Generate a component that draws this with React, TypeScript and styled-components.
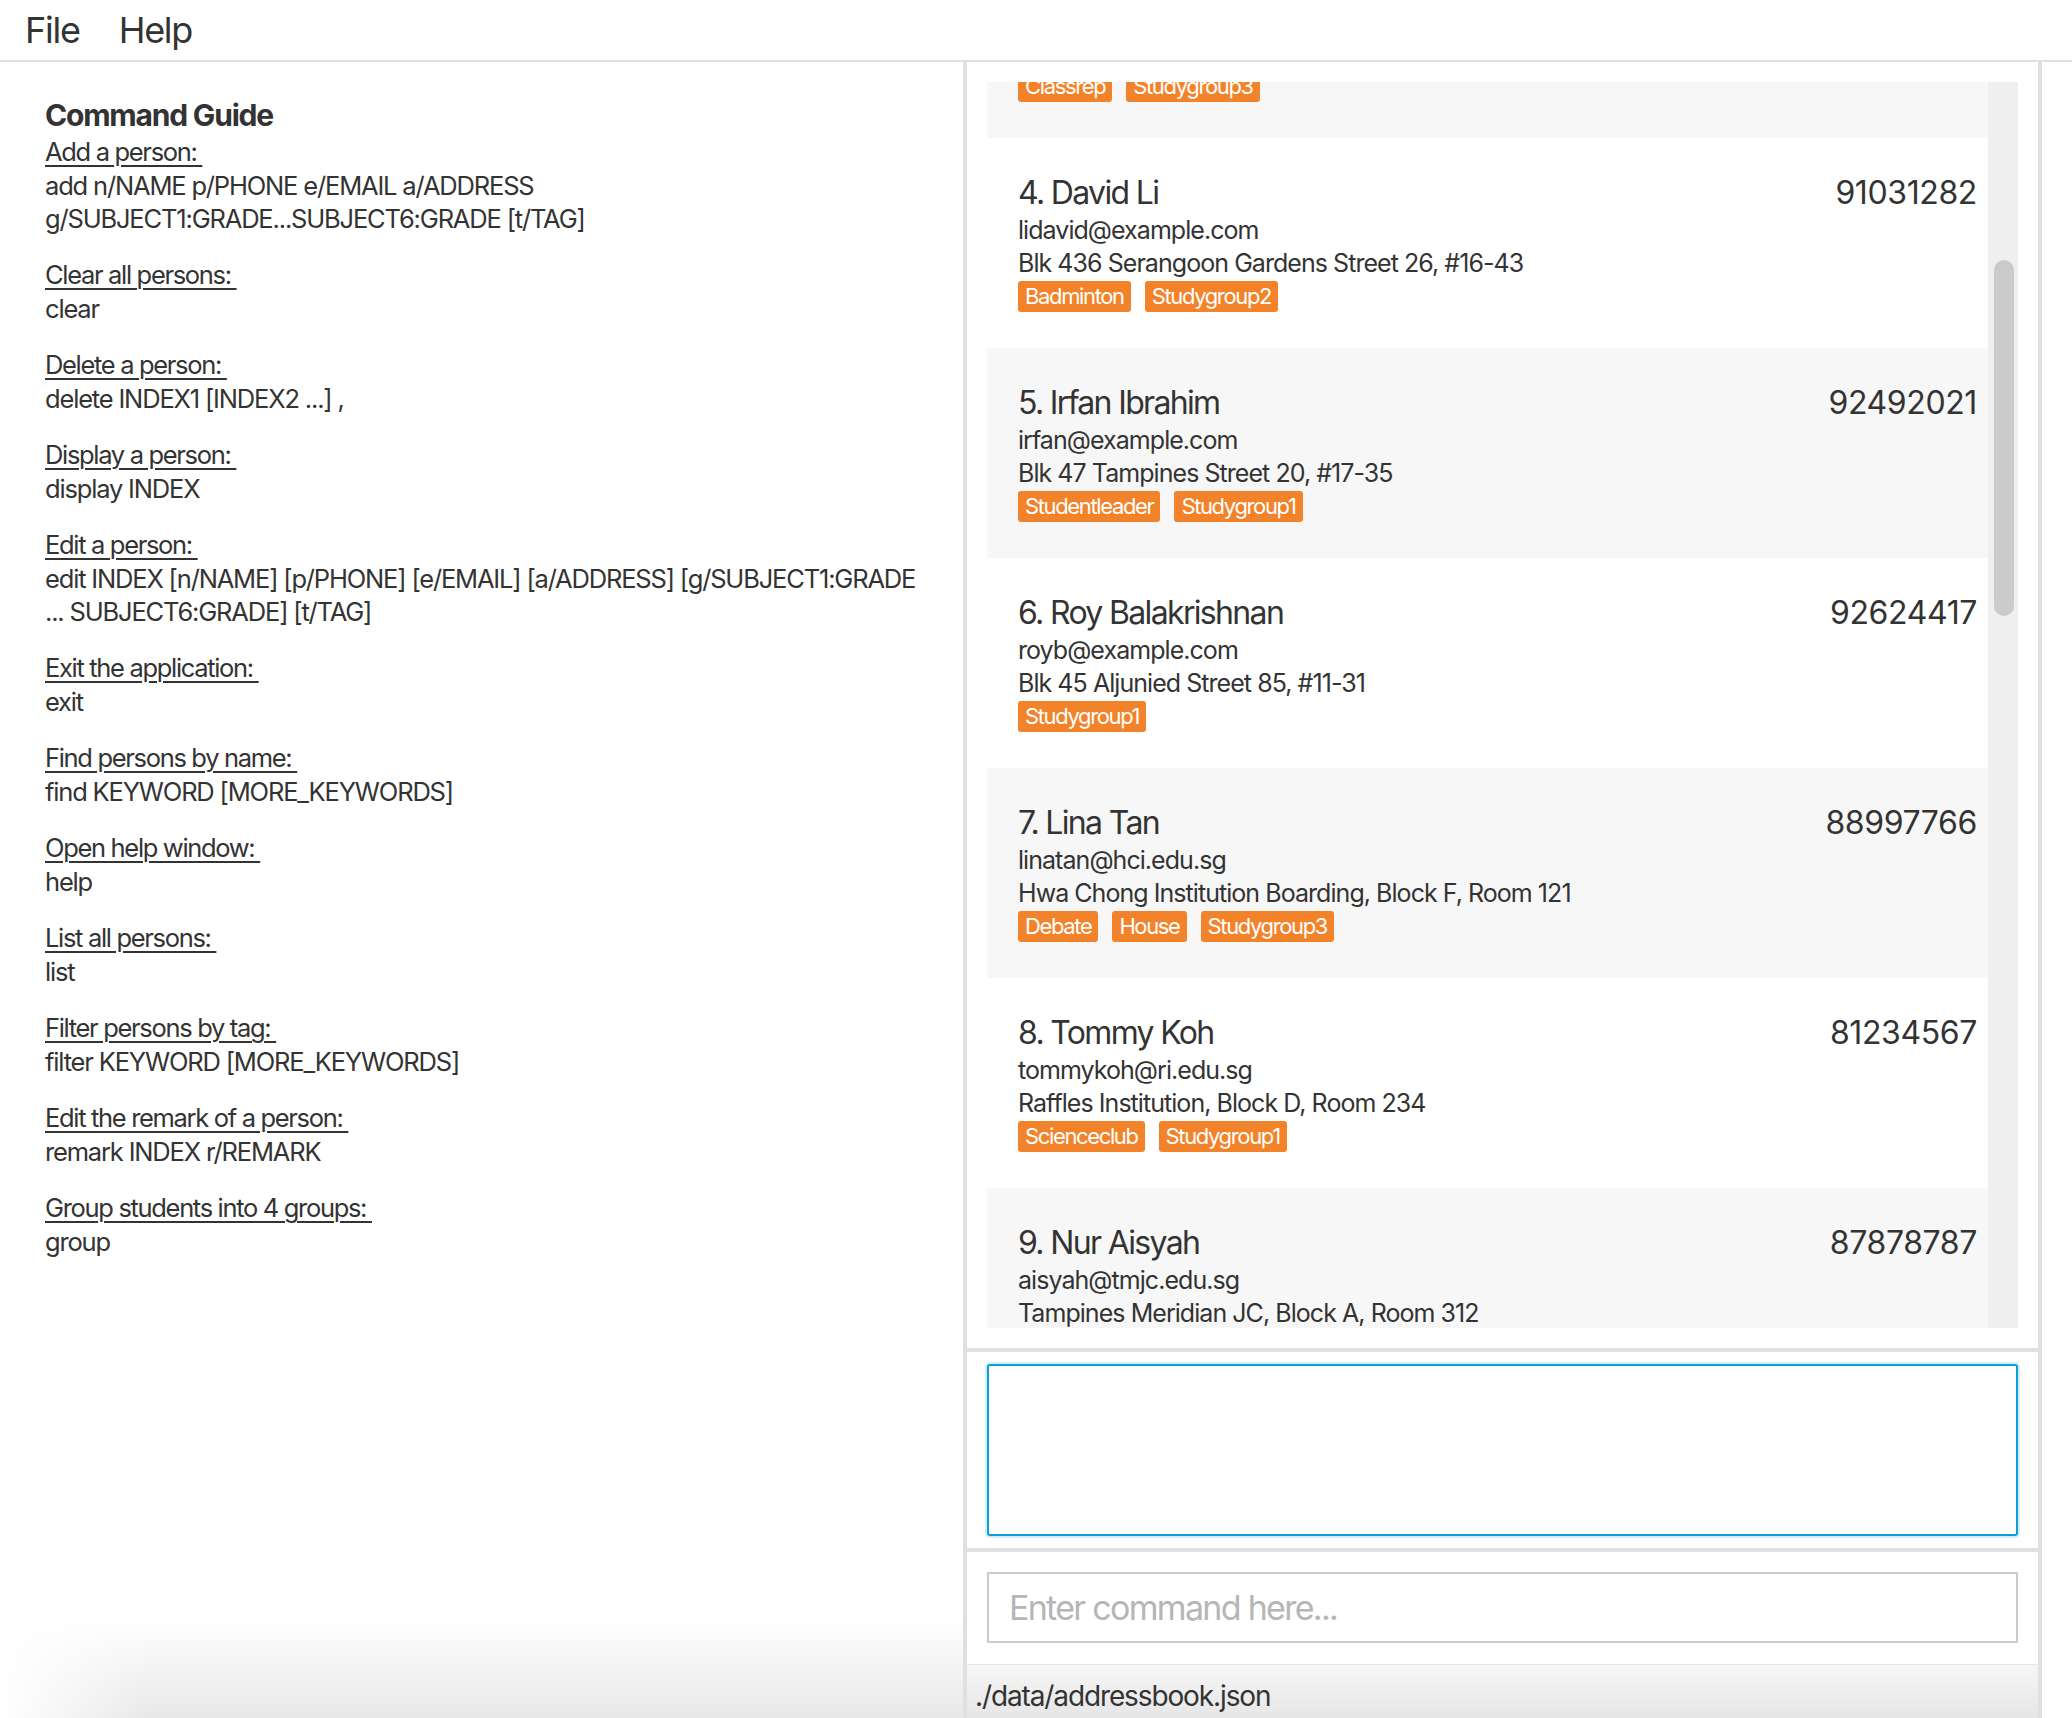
import React from "react";
import styled, { createGlobalStyle } from "styled-components";

const GlobalStyle = createGlobalStyle`
  html, body { margin: 0; padding: 0; background: #ffffff; }
  body { font-family: Inter, "Noto Sans", sans-serif; color: #333333; }
  * { box-sizing: border-box; }
`;

const Window = styled.div`
  width: 2072px;
  height: 1718px;
  display: flex;
  flex-direction: column;
  overflow: hidden;
  background: #ffffff;
`;

const MenuBar = styled.nav`
  flex: none;
  height: 62px;
  display: flex;
  align-items: center;
  padding-left: 5px;
  border-bottom: 2px solid #e0e0e0;
`;

const MenuItem = styled.span`
  padding: 0 19px 0 20px;
  font-size: 36px;
  line-height: 56px;
  letter-spacing: -0.035em;
  color: #333333;
`;

const Main = styled.div`
  flex: 1;
  display: flex;
  min-height: 0;
`;

const GuidePanel = styled.section`
  flex: none;
  width: 963px;
  padding: 34px 0 0 45px;
  background:
    linear-gradient(to right, #ffffff 0px, rgba(255, 255, 255, 0) 150px),
    linear-gradient(to bottom, #ffffff calc(100% - 100px), #e8e8e8 100%);
`;

const GuideHeading = styled.h1`
  margin: 0;
  font-size: 30px;
  font-weight: 700;
  line-height: 39px;
  letter-spacing: -0.04em;
  color: #333333;
`;

const GuideSection = styled.div`
  margin-bottom: 23px;
`;

const GuideTitle = styled.div`
  font-size: 25.5px;
  line-height: 34px;
  letter-spacing: -0.052em;
  color: #333333;
  span {
    text-decoration: underline;
    text-decoration-thickness: 2px;
    text-underline-offset: 4px;
    white-space: pre;
  }
`;

const GuideLine = styled.div`
  font-size: 25.5px;
  line-height: 33px;
  letter-spacing: -0.046em;
  color: #333333;
  white-space: pre;
`;

const AppPanel = styled.section`
  flex: none;
  width: 1079px;
  display: flex;
  flex-direction: column;
  border-left: 4px solid #e0e0e0;
  border-right: 4px solid #e0e0e0;
`;

const ListPane = styled.div`
  flex: 1;
  min-height: 0;
  padding: 20px;
  border-bottom: 4px solid #e0e0e0;
`;

const ListViewport = styled.div`
  height: 100%;
  display: flex;
`;

const CardsColumn = styled.div`
  flex: 1;
  min-width: 0;
  overflow: hidden;
  display: flex;
  flex-direction: column;
`;

const ScrollTrack = styled.div`
  flex: none;
  width: 30px;
  background: #efefef;
  padding: 178px 4px 0 6px;
`;

const ScrollThumb = styled.div`
  width: 20px;
  height: 356px;
  border-radius: 10px;
  background: #cbcbcb;
`;

const Card = styled.div<{ $odd: boolean; $cutTop: number }>`
  flex: none;
  height: 210px;
  margin-top: ${(p) => -p.$cutTop}px;
  padding: 35px 11px 0 31px;
  display: flex;
  flex-direction: column;
  background: ${(p) => (p.$odd ? "#f7f7f7" : "#ffffff")};
`;

const CardHeader = styled.div`
  height: 40px;
  display: flex;
  justify-content: space-between;
  font-size: 32px;
  line-height: 40px;
  color: #333333;
`;

const CardName = styled.span`
  letter-spacing: -0.052em;
`;

const CardPhone = styled.span`
  letter-spacing: -0.012em;
`;

const CardLine = styled.div`
  height: 33px;
  font-size: 25px;
  line-height: 34px;
  letter-spacing: -0.038em;
  color: #333333;
  white-space: nowrap;
`;

const TagRow = styled.div`
  margin-top: 2px;
  display: flex;
  gap: 14px;
`;

const Tag = styled.span`
  height: 31px;
  padding: 0 7px;
  border-radius: 3px;
  background: #f3832a;
  color: #ffffff;
  font-size: 22px;
  line-height: 31px;
  letter-spacing: -0.062em;
`;

const ResultPane = styled.div`
  flex: none;
  height: 200px;
  padding: 12px 20px;
  border-bottom: 4px solid #e0e0e0;
`;

const ResultBox = styled.textarea`
  display: block;
  width: 100%;
  height: 100%;
  resize: none;
  border: 2px solid #0b9fd6;
  border-radius: 3px;
  box-shadow: 0 0 0 2px rgba(3, 158, 211, 0.18);
  background: #ffffff;
  outline: none;
  font-family: Inter, "Noto Sans", sans-serif;
  font-size: 26px;
`;

const CommandPane = styled.div`
  flex: none;
  height: 112px;
  padding: 20px 20px 21px;
`;

const CommandInput = styled.input`
  display: block;
  width: 100%;
  height: 100%;
  border: 2px solid #cccccc;
  padding: 0 20px;
  background: #ffffff;
  outline: none;
  font-family: Inter, "Noto Sans", sans-serif;
  font-size: 34px;
  letter-spacing: -0.05em;
  color: #333333;
  &::placeholder {
    color: #b6b6b6;
  }
`;

const StatusBar = styled.footer`
  flex: none;
  height: 54px;
  padding: 9px 0 0 8px;
  border-top: 1px solid #e6e6e6;
  background: linear-gradient(to bottom, #f6f6f6, #e6e6e6);
  font-size: 28px;
  line-height: 44px;
  letter-spacing: -0.04em;
  color: #333333;
`;

type Guide = { title: string; lines: string[] };

const guides: Guide[] = [
  {
    title: "Add a person:",
    lines: [
      "add n/NAME p/PHONE e/EMAIL a/ADDRESS",
      "g/SUBJECT1:GRADE...SUBJECT6:GRADE [t/TAG]",
    ],
  },
  { title: "Clear all persons:", lines: ["clear"] },
  { title: "Delete a person:", lines: ["delete INDEX1 [INDEX2 ...] ,"] },
  { title: "Display a person:", lines: ["display INDEX"] },
  {
    title: "Edit a person:",
    lines: [
      "edit INDEX [n/NAME] [p/PHONE] [e/EMAIL] [a/ADDRESS] [g/SUBJECT1:GRADE",
      "... SUBJECT6:GRADE] [t/TAG]",
    ],
  },
  { title: "Exit the application:", lines: ["exit"] },
  { title: "Find persons by name:", lines: ["find KEYWORD [MORE_KEYWORDS]"] },
  { title: "Open help window:", lines: ["help"] },
  { title: "List all persons:", lines: ["list"] },
  { title: "Filter persons by tag:", lines: ["filter KEYWORD [MORE_KEYWORDS]"] },
  { title: "Edit the remark of a person:", lines: ["remark INDEX r/REMARK"] },
  { title: "Group students into 4 groups:", lines: ["group"] },
];

type Person = {
  index: number;
  name: string;
  phone: string;
  email: string;
  address: string;
  tags: string[];
  cutTop?: number;
};

const persons: Person[] = [
  { index: 3, name: "", phone: "", email: "", address: "", tags: ["Classrep", "Studygroup3"], cutTop: 154 },
  {
    index: 4,
    name: "David Li",
    phone: "91031282",
    email: "lidavid@example.com",
    address: "Blk 436 Serangoon Gardens Street 26, #16-43",
    tags: ["Badminton", "Studygroup2"],
  },
  {
    index: 5,
    name: "Irfan Ibrahim",
    phone: "92492021",
    email: "irfan@example.com",
    address: "Blk 47 Tampines Street 20, #17-35",
    tags: ["Studentleader", "Studygroup1"],
  },
  {
    index: 6,
    name: "Roy Balakrishnan",
    phone: "92624417",
    email: "royb@example.com",
    address: "Blk 45 Aljunied Street 85, #11-31",
    tags: ["Studygroup1"],
  },
  {
    index: 7,
    name: "Lina Tan",
    phone: "88997766",
    email: "linatan@hci.edu.sg",
    address: "Hwa Chong Institution Boarding, Block F, Room 121",
    tags: ["Debate", "House", "Studygroup3"],
  },
  {
    index: 8,
    name: "Tommy Koh",
    phone: "81234567",
    email: "tommykoh@ri.edu.sg",
    address: "Raffles Institution, Block D, Room 234",
    tags: ["Scienceclub", "Studygroup1"],
  },
  {
    index: 9,
    name: "Nur Aisyah",
    phone: "87878787",
    email: "aisyah@tmjc.edu.sg",
    address: "Tampines Meridian JC, Block A, Room 312",
    tags: [],
  },
];

function PersonCard({ person }: { person: Person }) {
  return (
    <Card $odd={person.index % 2 === 1} $cutTop={person.cutTop ?? 0}>
      <CardHeader>
        <CardName>{person.name ? `${person.index}. ${person.name}` : ""}</CardName>
        <CardPhone>{person.phone}</CardPhone>
      </CardHeader>
      <CardLine>{person.email}</CardLine>
      <CardLine>{person.address}</CardLine>
      <TagRow>
        {person.tags.map((t) => (
          <Tag key={t}>{t}</Tag>
        ))}
      </TagRow>
    </Card>
  );
}

export default function App() {
  return (
    <>
      <GlobalStyle />
      <Window>
        <MenuBar>
          <MenuItem>File</MenuItem>
          <MenuItem>Help</MenuItem>
        </MenuBar>
        <Main>
          <GuidePanel>
            <GuideHeading>Command Guide</GuideHeading>
            {guides.map((g) => (
              <GuideSection key={g.title}>
                <GuideTitle>
                  <span>{g.title + " "}</span>
                </GuideTitle>
                {g.lines.map((l) => (
                  <GuideLine key={l}>{l}</GuideLine>
                ))}
              </GuideSection>
            ))}
          </GuidePanel>
          <AppPanel>
            <ListPane>
              <ListViewport>
                <CardsColumn>
                  {persons.map((p) => (
                    <PersonCard key={p.index} person={p} />
                  ))}
                </CardsColumn>
                <ScrollTrack>
                  <ScrollThumb />
                </ScrollTrack>
              </ListViewport>
            </ListPane>
            <ResultPane>
              <ResultBox readOnly value="" />
            </ResultPane>
            <CommandPane>
              <CommandInput placeholder="Enter command here..." />
            </CommandPane>
            <StatusBar>./data/addressbook.json</StatusBar>
          </AppPanel>
        </Main>
      </Window>
    </>
  );
}
